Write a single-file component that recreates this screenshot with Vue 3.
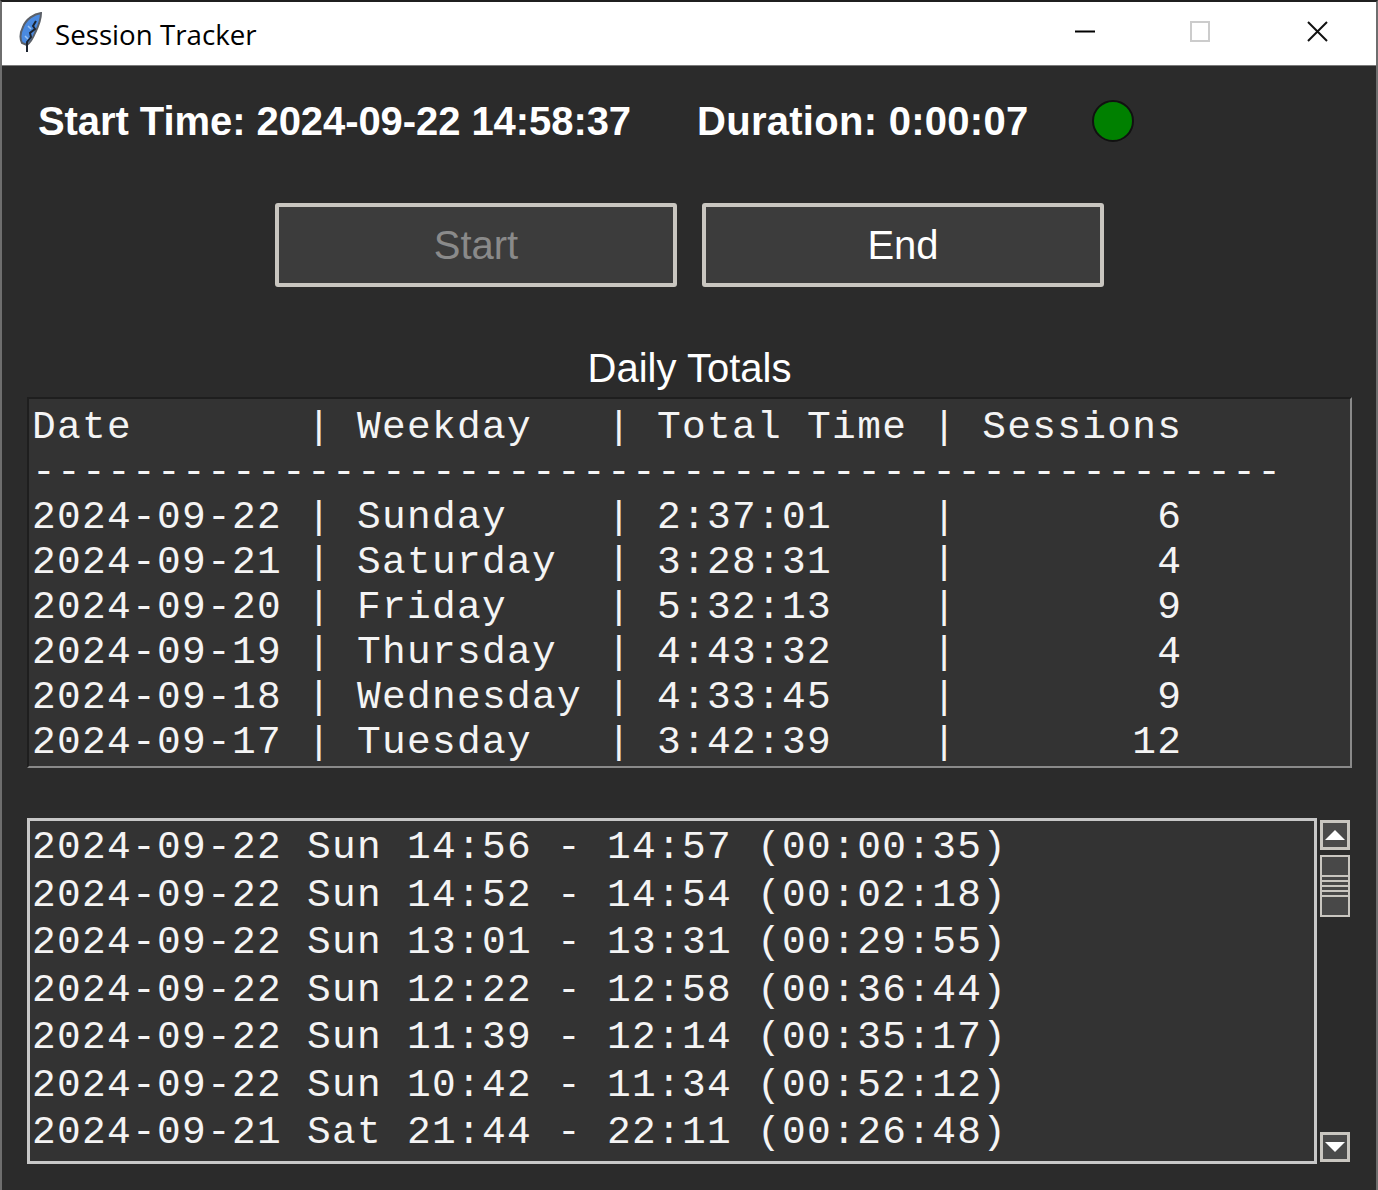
<template>
  <div class="window">
    <div class="titlebar">
      <svg class="feather" width="28" height="42" viewBox="0 0 28 42">
        <path d="M23 1 C16 2 8 7 5 15 C2 21 2 27 4 31 L9 33 C13 30 15 26 17 21 C20 15 23 8 23 1 Z" fill="#4a8ae0" stroke="#5b6068" stroke-width="2"/>
        <path d="M18 9 L15 14 L17 17 L12 21 L13 25 L9 30 L9 40" fill="none" stroke="#1c2430" stroke-width="2"/>
        <path d="M7 24 L10 27 M10 14 L13 17" fill="none" stroke="#9cc4f2" stroke-width="1.5"/>
      </svg>
      <span class="title">Session Tracker</span>
      <div class="winbtns">
        <svg width="22" height="22" viewBox="0 0 22 22"><path d="M0 10.5 H20" stroke="#000" stroke-width="2"/></svg>
        <svg width="22" height="22" viewBox="0 0 22 22"><rect x="0" y="1" width="18" height="19" fill="none" stroke="#ccc" stroke-width="2"/></svg>
        <svg width="22" height="22" viewBox="0 0 22 22"><path d="M1 1 L20 20 M20 1 L1 20" stroke="#111" stroke-width="2"/></svg>
      </div>
    </div>

    <div class="content">
      <div class="status">
        <span class="label start-label">Start Time: {{ startTime }}</span>
        <span class="label duration-label">Duration: {{ duration }}</span>
        <span class="led"></span>
      </div>

      <div class="buttons">
        <button class="btn disabled" disabled>Start</button>
        <button class="btn">End</button>
      </div>

      <div class="heading">Daily Totals</div>

      <div class="totals">
        <pre class="mono">{{ totalsText }}</pre>
      </div>

      <div class="history-row">
        <div class="history">
          <div v-for="line in sessions" :key="line" class="mono session">{{ line }}</div>
        </div>
        <div class="scrollbar">
          <div class="arrow"><span class="tri up"></span></div>
          <div class="thumb">
            <i v-for="n in 5" :key="n"></i>
          </div>
          <div class="spacer"></div>
          <div class="arrow"><span class="tri down"></span></div>
        </div>
      </div>
    </div>
  </div>
</template>

<script setup>
const startTime = '2024-09-22 14:58:37'
const duration = '0:00:07'

// filas de la tabla de totales
const rows = [
  ['2024-09-22', 'Sunday', '2:37:01', 6],
  ['2024-09-21', 'Saturday', '3:28:31', 4],
  ['2024-09-20', 'Friday', '5:32:13', 9],
  ['2024-09-19', 'Thursday', '4:43:32', 4],
  ['2024-09-18', 'Wednesday', '4:33:45', 9],
  ['2024-09-17', 'Tuesday', '3:42:39', 12]
]

const totalsText = [
  'Date       | Weekday   | Total Time | Sessions',
  '-'.repeat(50),
  ...rows.map(
    (r) =>
      `${r[0]} | ${r[1].padEnd(9)} | ${r[2].padEnd(10)} | ${String(r[3]).padStart(8)}`
  )
].join('\n')

const sessions = [
  '2024-09-22 Sun 14:56 - 14:57 (00:00:35)',
  '2024-09-22 Sun 14:52 - 14:54 (00:02:18)',
  '2024-09-22 Sun 13:01 - 13:31 (00:29:55)',
  '2024-09-22 Sun 12:22 - 12:58 (00:36:44)',
  '2024-09-22 Sun 11:39 - 12:14 (00:35:17)',
  '2024-09-22 Sun 10:42 - 11:34 (00:52:12)',
  '2024-09-21 Sat 21:44 - 22:11 (00:26:48)'
]
</script>

<style>
html,
body {
  margin: 0;
  background: #2b2b2b;
  overflow: hidden;
}
</style>

<style scoped>
.window {
  width: 1378px;
  height: 1190px;
  box-sizing: border-box;
  border-top: 2px solid #1f1f1f;
  border-left: 2px solid #6e6e6e;
  border-right: 2px solid #6e6e6e;
  display: flex;
  flex-direction: column;
  background: #2b2b2b;
  font-family: "Liberation Sans", Arial, sans-serif;
  overflow: hidden;
}
.titlebar {
  height: 64px;
  flex: none;
  box-sizing: border-box;
  background: #fff;
  border-bottom: 1px solid #7a7a7a;
  display: flex;
  align-items: center;
  padding-left: 16px;
  color: #000;
}
.feather {
  flex: none;
  margin-top: -1px;
}
.title {
  font-family: "Open Sans", "Noto Sans", sans-serif;
  font-size: 27.7px;
  margin-left: 9px;
  margin-top: 1px;
}
.winbtns {
  margin-left: auto;
  display: flex;
  gap: 94px;
  padding-right: 47px;
  margin-top: -4px;
}
.winbtns svg {
  overflow: visible;
}
.content {
  flex: 1;
  display: flex;
  flex-direction: column;
  padding: 0 24px 0 25px;
}
.status {
  display: flex;
  align-items: center;
  height: 110px;
  padding-left: 11px;
  color: #fff;
}
.label {
  font-size: 40px;
  font-weight: 700;
  white-space: nowrap;
}
.start-label {
  margin-right: 66px;
  letter-spacing: -0.07px;
}
.duration-label {
  letter-spacing: 0.28px;
}
.led {
  width: 38px;
  height: 38px;
  margin-left: 63px;
  border-radius: 50%;
  background: #008000;
  border: 2px solid #111;
}
.buttons {
  display: flex;
  justify-content: center;
  gap: 25px;
  margin-top: 27px;
}
.btn {
  width: 402px;
  height: 84px;
  box-sizing: border-box;
  background: #3c3c3c;
  border: 4px solid #c9c6c0;
  border-radius: 3px;
  color: #fff;
  font-family: inherit;
  font-size: 40px;
  padding: 0;
}
.btn.disabled {
  color: #8a8a8a;
}
.heading {
  margin-top: 56px;
  text-align: center;
  color: #fff;
  font-size: 40px;
  line-height: 50px;
  height: 54px;
}
.mono {
  font-family: "Liberation Mono", "Courier New", monospace;
  font-size: 39.5px;
  letter-spacing: 1.3px;
  color: #f4f4f4;
  margin: 0;
  white-space: pre;
}
.totals {
  box-sizing: border-box;
  height: 371px;
  background: #333;
  border: 2px solid #8a8a8a;
  border-top-color: #1e1e1e;
  border-left-color: #1e1e1e;
  padding: 6px 0 0 3px;
  overflow: hidden;
}
.totals pre {
  line-height: 45px;
}
.history-row {
  display: flex;
  margin-top: 50px;
  height: 346px;
}
.history {
  width: 1290px;
  box-sizing: border-box;
  background: #333;
  border: 3px solid #c8c8c8;
  padding: 3px 0 0 2px;
  overflow: hidden;
}
.session {
  line-height: 47.5px;
}
.scrollbar {
  width: 30px;
  margin-left: 3px;
  display: flex;
  flex-direction: column;
  padding-top: 2px;
  padding-bottom: 2px;
}
.arrow {
  height: 30px;
  box-sizing: border-box;
  border: 3px solid #c9c6c0;
  background: #4a4a4a;
  display: flex;
  align-items: center;
  justify-content: center;
}
.tri {
  width: 0;
  height: 0;
  border-left: 10px solid transparent;
  border-right: 10px solid transparent;
}
.tri.up {
  border-bottom: 10px solid #fff;
}
.tri.down {
  border-top: 10px solid #fff;
}
.thumb {
  margin-top: 5px;
  height: 62px;
  box-sizing: border-box;
  border: 2px solid #c9c6c0;
  background: #484848;
  display: flex;
  flex-direction: column;
  justify-content: center;
  gap: 3px;
}
.thumb i {
  display: block;
  height: 2px;
  background: #c9c6c0;
}
.spacer {
  flex: 1;
}
</style>
